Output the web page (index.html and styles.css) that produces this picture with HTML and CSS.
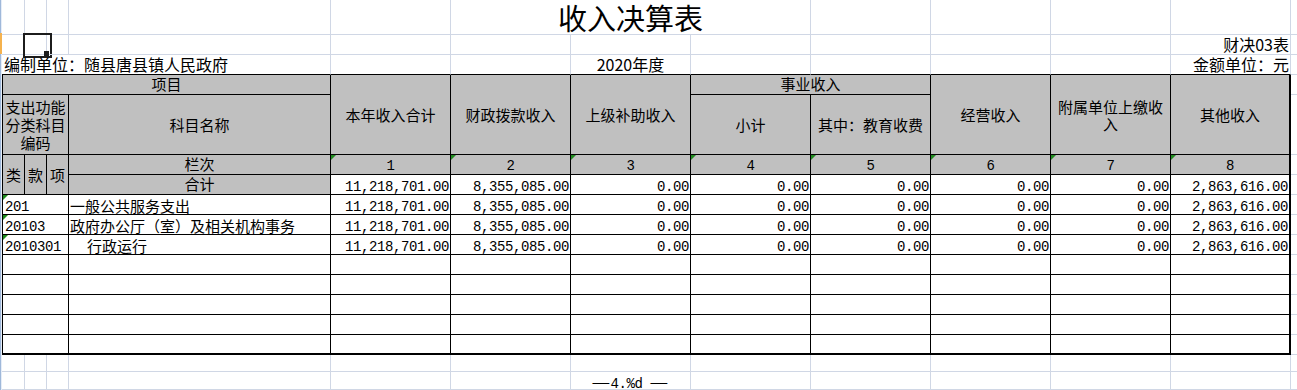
FILE: index.html
```html
<!DOCTYPE html>
<html lang="zh-CN">
<head>
<meta charset="utf-8">
<title>收入决算表</title>
<link rel="stylesheet" href="styles.css">
</head>
<body>
<div class="page">
  <div class="edge"><div class="edge-a"></div><div class="edge-sel"></div><div class="edge-b"></div></div>
  <div class="sheet">
    <!-- row 1 -->
    <div class="c"></div><div class="c"></div><div class="c"></div><div class="c"></div><div class="c"></div>
    <div class="c s3 title">收入决算表</div>
    <div class="c"></div><div class="c"></div><div class="c"></div><div class="c"></div><div class="c end"></div>
    <!-- row 2 -->
    <div class="c"></div><div class="c sel"></div>
    <div class="c"></div><div class="c"></div><div class="c"></div><div class="c"></div><div class="c"></div><div class="c"></div><div class="c"></div><div class="c"></div><div class="c"></div>
    <div class="c lbl ra">财决03表</div><div class="c end"></div>
    <!-- row 3 -->
    <div class="c s4 tb lbl la">编制单位：随县唐县镇人民政府</div>
    <div class="c tb"></div><div class="c tb"></div>
    <div class="c tb lbl ca">2020年度</div>
    <div class="c tb"></div><div class="c tb"></div><div class="c tb"></div><div class="c tb"></div>
    <div class="c tb lbl ra">金额单位：元</div><div class="c end"></div>
    <!-- row 4 -->
    <div class="c t g first s4 h h20">项目</div>
    <div class="c t g r2 h">本年收入合计</div>
    <div class="c t g r2 h">财政拨款收入</div>
    <div class="c t g r2 h">上级补助收入</div>
    <div class="c t g s2 h h20">事业收入</div>
    <div class="c t g r2 h">经营收入</div>
    <div class="c t g r2 h">附属单位上缴收入</div>
    <div class="c t g r2 h last">其他收入</div>
    <div class="c end"></div>
    <!-- row 5 -->
    <div class="c t g first s3 h multi">支出功能分类科目编码</div>
    <div class="c t g h">科目名称</div>
    <div class="c t g h">小计</div>
    <div class="c t g h">其中：教育收费</div>
    <div class="c end"></div>
    <!-- row 6 -->
    <div class="c t g first r2 h">类</div>
    <div class="c t g r2 h">款</div>
    <div class="c t g r2 h">项</div>
    <div class="c t g h h20">栏次</div>
    <div class="c t g n tri">1</div>
    <div class="c t g n tri">2</div>
    <div class="c t g n tri">3</div>
    <div class="c t g n tri">4</div>
    <div class="c t g n tri">5</div>
    <div class="c t g n tri">6</div>
    <div class="c t g n tri">7</div>
    <div class="c t g n tri last">8</div>
    <div class="c end"></div>
    <!-- row 7 -->
    <div class="c t g h h20">合计</div>
    <div class="c t num">11,218,701.00</div>
    <div class="c t num">8,355,085.00</div>
    <div class="c t num">0.00</div>
    <div class="c t num">0.00</div>
    <div class="c t num">0.00</div>
    <div class="c t num">0.00</div>
    <div class="c t num">0.00</div>
    <div class="c t num last">2,863,616.00</div>
    <div class="c end"></div>
    <!-- row 8 -->
    <div class="c t first s3 code tri">201</div>
    <div class="c t name">一般公共服务支出</div>
    <div class="c t num">11,218,701.00</div>
    <div class="c t num">8,355,085.00</div>
    <div class="c t num">0.00</div>
    <div class="c t num">0.00</div>
    <div class="c t num">0.00</div>
    <div class="c t num">0.00</div>
    <div class="c t num">0.00</div>
    <div class="c t num last">2,863,616.00</div>
    <div class="c end"></div>
    <!-- row 9 -->
    <div class="c t first s3 code tri">20103</div>
    <div class="c t name">政府办公厅（室）及相关机构事务</div>
    <div class="c t num">11,218,701.00</div>
    <div class="c t num">8,355,085.00</div>
    <div class="c t num">0.00</div>
    <div class="c t num">0.00</div>
    <div class="c t num">0.00</div>
    <div class="c t num">0.00</div>
    <div class="c t num">0.00</div>
    <div class="c t num last">2,863,616.00</div>
    <div class="c end"></div>
    <!-- row 10 -->
    <div class="c t first s3 code tri">2010301</div>
    <div class="c t name indent">行政运行</div>
    <div class="c t num">11,218,701.00</div>
    <div class="c t num">8,355,085.00</div>
    <div class="c t num">0.00</div>
    <div class="c t num">0.00</div>
    <div class="c t num">0.00</div>
    <div class="c t num">0.00</div>
    <div class="c t num">0.00</div>
    <div class="c t num last">2,863,616.00</div>
    <div class="c end"></div>
    <!-- rows 11-14 empty -->
    <div class="c t first s3"></div><div class="c t"></div>
    <div class="c t"></div><div class="c t"></div><div class="c t"></div><div class="c t"></div><div class="c t"></div><div class="c t"></div><div class="c t"></div><div class="c t last"></div>
    <div class="c end"></div>
    <div class="c t first s3"></div><div class="c t"></div>
    <div class="c t"></div><div class="c t"></div><div class="c t"></div><div class="c t"></div><div class="c t"></div><div class="c t"></div><div class="c t"></div><div class="c t last"></div>
    <div class="c end"></div>
    <div class="c t first s3"></div><div class="c t"></div>
    <div class="c t"></div><div class="c t"></div><div class="c t"></div><div class="c t"></div><div class="c t"></div><div class="c t"></div><div class="c t"></div><div class="c t last"></div>
    <div class="c end"></div>
    <div class="c t first s3"></div><div class="c t"></div>
    <div class="c t"></div><div class="c t"></div><div class="c t"></div><div class="c t"></div><div class="c t"></div><div class="c t"></div><div class="c t"></div><div class="c t last"></div>
    <div class="c end"></div>
    <!-- row 15 (last table row) -->
    <div class="c t bot first s3"></div><div class="c t bot"></div>
    <div class="c t bot"></div><div class="c t bot"></div><div class="c t bot"></div><div class="c t bot"></div><div class="c t bot"></div><div class="c t bot"></div><div class="c t bot"></div><div class="c t bot last"></div>
    <div class="c end"></div>
    <!-- row 16 -->
    <div class="c"></div><div class="c"></div><div class="c"></div><div class="c"></div><div class="c"></div><div class="c"></div><div class="c"></div><div class="c"></div><div class="c"></div><div class="c"></div><div class="c"></div><div class="c"></div><div class="c end"></div>
    <!-- row 17 -->
    <div class="c"></div><div class="c"></div><div class="c"></div><div class="c"></div><div class="c"></div><div class="c"></div>
    <div class="c foot"><span class="dash">—</span><span class="fm">4.%d </span><span class="dash">—</span></div>
    <div class="c"></div><div class="c"></div><div class="c"></div><div class="c"></div><div class="c"></div><div class="c end"></div>
  </div>
</div>
</body>
</html>
```
FILE: styles.css
```css
* { box-sizing: border-box; margin: 0; padding: 0; }
html, body { width: 1297px; height: 390px; overflow: hidden; background: #fff; }
body {
  font-family: "Noto Sans CJK SC", "Noto Sans", sans-serif;
  font-size: 15px;
  color: #000;
}
.page { display: flex; align-items: stretch; height: 390px; }
.edge { width: 2px; display: flex; flex-direction: column; }
.edge-a, .edge-b { background: linear-gradient(to right, #9fb8da 1px, #e6edf7 1px); }
.edge-a { height: 33px; }
.edge-sel { height: 21px; background: #f5b24e; }
.edge-b { flex: 1; }

.sheet {
  display: grid;
  grid-template-columns: 23px 22px 22px 262px repeat(8, 120px) 6px;
  grid-template-rows: 35px 20px 20px 20px 60px repeat(10, 20px) 17px 18px;
}
.c {
  position: relative;
  min-width: 0;
  border-right: 1px solid #d0d7e5;
  border-bottom: 1px solid #d0d7e5;
  white-space: nowrap;
}
.end { border-right: none; }
.s2 { grid-column: span 2; }
.s3 { grid-column: span 3; }
.s4 { grid-column: span 4; }
.r2 { grid-row: span 2; }

.tb { border-bottom-color: #000; }
.t { border-right-color: #000; border-bottom-color: #000; }
.first { border-left: 1px solid #000; }
.last { border-right-width: 2px; }
.bot { border-bottom-width: 2px; }
.g { background: #c0c0c0; }

.title {
  display: flex;
  justify-content: center;
  align-items: center;
  font-size: 29px;
  line-height: 32px;
}
.lbl {
  display: flex;
  align-items: center;
  font-size: 16px;
  line-height: 19px;
}
.la { justify-content: flex-start; padding-left: 2px; }
.ca { justify-content: center; }
.ra { justify-content: flex-end; padding-right: 1px; }

.h {
  display: flex;
  align-items: center;
  justify-content: center;
  text-align: center;
  white-space: normal;
  line-height: 17px;
}
.h20 { padding-bottom: 2px; }
.multi { line-height: 18px; padding: 0 1px; }

.n, .num, .code, .foot .fm {
  font-family: "Liberation Mono", "DejaVu Sans Mono", monospace;
  font-size: 14px;
  letter-spacing: -0.4px;
}
.n {
  text-align: center;
  line-height: 19px;
  padding-top: 2px;
}
.num {
  text-align: right;
  line-height: 19px;
  padding-top: 3px;
  padding-right: 1px;
}
.code {
  line-height: 19px;
  padding-top: 3px;
  padding-left: 2px;
}
.name {
  line-height: 19px;
  padding-top: 1px;
  padding-left: 1px;
}
.indent { padding-left: 18px; }

.tri::before {
  content: "";
  position: absolute;
  left: 0;
  top: 0;
  width: 0;
  height: 0;
  border-top: 5px solid #1f8a1f;
  border-right: 5px solid transparent;
}

.sel::after {
  content: "";
  position: absolute;
  left: -2px;
  top: -2px;
  width: 25px;
  height: 21px;
  border: 2px solid #1c1c1c;
}
.sel::before {
  content: "";
  position: absolute;
  left: 19px;
  top: 16px;
  width: 5px;
  height: 6px;
  background: #1c1c1c;
  z-index: 1;
}

.foot {
  text-align: center;
  line-height: 17px;
  padding-top: 1px;
}
.fm { white-space: pre; }
.dash {
  display: inline-block;
  width: 16px;
  margin-right: 1px;
  text-align: center;
  font-size: 15px;
  transform: scaleX(1.4);
}
```
